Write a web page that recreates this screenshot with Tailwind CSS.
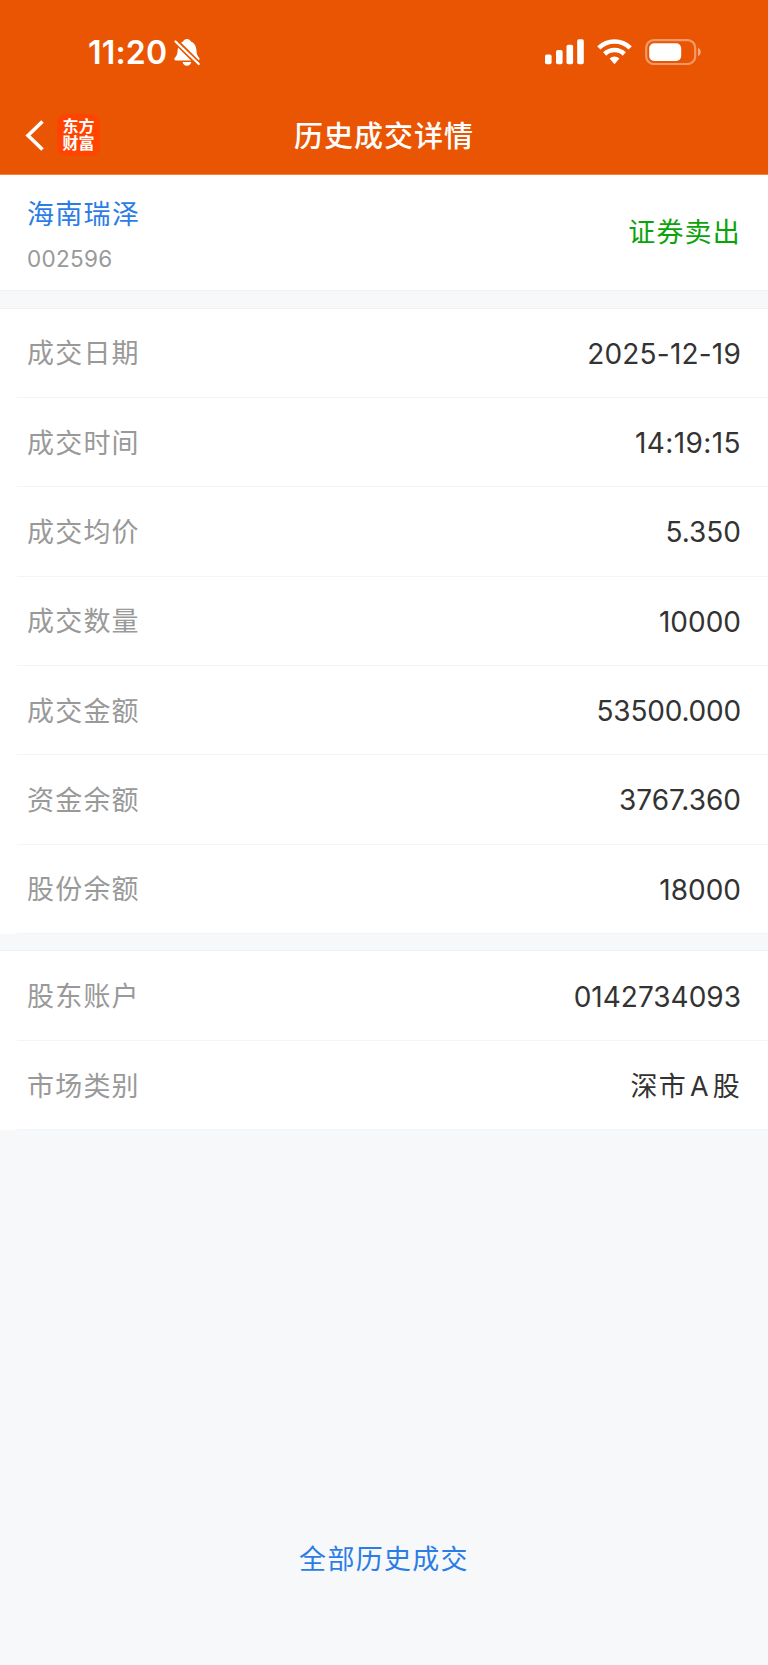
<!DOCTYPE html>
<html lang="zh-CN">
<head>
<meta charset="utf-8">
<title>历史成交详情</title>
<script src="https://cdn.jsdelivr.net/npm/@tailwindcss/browser@4"></script>
</head>
<body class="w-[768px] h-[1665px] bg-[#f7f8fa] flex flex-col overflow-hidden font-['Inter','Noto_Sans_CJK_SC',sans-serif] text-[27px] text-[#333333]">
<header class="h-[175px] shrink-0 bg-[#ea5504] text-white flex flex-col border-b border-[#f3803f]">
  <div class="h-[98px] pt-[6px] pl-[88px] pr-[67px] flex items-center justify-between">
    <div class="flex items-center gap-[6px]">
      <span class="pt-[2px] text-[32px] leading-[40px] font-semibold tracking-[0.200px]">11:20</span>
      <svg class="w-[28px] h-[30px]" viewBox="0 0 28 30">
        <path fill="#fff" d="M14 2c1.900 0 3.300 1 3.900 2.500 3.500 1.300 5.200 4.300 5.500 8.300.3 4.500 1.100 5.900 2.700 7.900.8 1 .6 2.700-1.300 2.700H3c-1.700 0-2.200-1.600-1.200-2.700 2-2.200 2.600-3.700 2.900-8 .2-4 2-6.900 5.400-8.200C10.700 3 12.100 2 14 2zM9.600 25h8.700c-.4 2.200-2.200 3.700-4.400 3.700S10 27.200 9.600 25z"/>
        <path stroke="#ea5504" stroke-width="5.600" d="M0 1.500 28 29.500"/>
        <path stroke="#fff" stroke-width="2.200" stroke-linecap="round" d="M2.500 4.500 25.800 27"/>
      </svg>
    </div>
    <div class="flex items-center gap-[13px]">
      <svg class="w-[40px] h-[26px]" viewBox="0 0 40 26" fill="#fff">
        <rect x="1" y="15.500" width="6.600" height="9.800" rx="1.800"/><rect x="12" y="11" width="6.600" height="14.300" rx="1.800"/><rect x="22.500" y="5.800" width="6.600" height="19.500" rx="1.800"/><rect x="33.200" y="0.200" width="6.600" height="25.100" rx="1.800"/>
      </svg>
      <svg class="w-[35px] h-[26px]" viewBox="0 0 35 26" fill="none" stroke="#fff" stroke-width="4.600">
        <path d="M1.800 8.900C10.500.4 24.500.4 33.200 8.900"/>
        <path d="M7.700 15C13.200 9.700 21.800 9.700 27.300 15"/>
        <path fill="#fff" stroke="none" d="M12.600 19.400c3-2.700 6.800-2.700 9.800 0L17.500 25.300z"/>
      </svg>
      <svg class="w-[56px] h-[26px]" viewBox="0 0 56 26">
        <rect x="1.200" y="1.200" width="49" height="23.800" rx="7.500" fill="none" stroke="#fff" stroke-opacity=".4" stroke-width="2.200"/>
        <rect x="4.200" y="4.200" width="32" height="17.800" rx="5" fill="#fff"/>
        <path fill="#fff" fill-opacity=".5" d="M53 8.800c3.600 1.300 3.600 7 0 8.300z"/>
      </svg>
    </div>
  </div>
  <div class="h-[76px] px-[25px] grid grid-cols-[1fr_auto_1fr] items-center">
    <div class="flex items-center gap-[12px]">
      <svg class="w-[20px] h-[34px]" viewBox="0 0 20 34"><path d="M17.500 2.500 3 16.500 17.500 30.500" fill="none" stroke="#fff" stroke-width="3.600"/></svg>
      <div class="w-[43px] h-[42px] mb-[2px] rounded-[9px] bg-[#ff4400] flex flex-col items-center justify-center font-bold text-[16px] leading-[17.500px]"><span>东方</span><span>财富</span></div>
    </div>
    <h1 class="pt-[2px] text-[29px] leading-[40px] font-medium tracking-[1px]">历史成交详情</h1>
    <div></div>
  </div>
</header>
<section class="h-[116px] shrink-0 bg-white border-b border-[#f1f2f4] px-[27px] flex items-center justify-between">
  <div class="flex flex-col pt-[5px]">
    <span class="leading-[40px] tracking-[1.300px] text-[#2b7de5]">海南瑞泽</span>
    <span class="mt-[8px] text-[22.500px] leading-[32px] tracking-[0.300px] text-[#999999]">002596</span>
  </div>
  <span class="leading-[40px] tracking-[1.200px] text-[#0aa30a]">证券卖出</span>
</section>
<div class="h-[17.500px] shrink-0 border-b border-[#eff0f2]"></div>
<section class="shrink-0 bg-white pl-[17px] flex flex-col">
  <div class="h-[89.350px] border-b border-[#f3f4f5] pl-[10px] pr-[27px] flex items-center justify-between"><span class="pt-[4px] tracking-[1.200px] text-[#999999]">成交日期</span><span class="pt-[2px] text-[28px] tracking-[0.200px]">2025-12-19</span></div>
  <div class="h-[89.350px] border-b border-[#f3f4f5] pl-[10px] pr-[27px] flex items-center justify-between"><span class="pt-[4px] tracking-[1.200px] text-[#999999]">成交时间</span><span class="pt-[2px] text-[28px] tracking-[0.400px]">14:19:15</span></div>
  <div class="h-[89.350px] border-b border-[#f3f4f5] pl-[10px] pr-[27px] flex items-center justify-between"><span class="pt-[4px] tracking-[1.200px] text-[#999999]">成交均价</span><span class="pt-[2px] text-[28px]">5.350</span></div>
  <div class="h-[89.350px] border-b border-[#f3f4f5] pl-[10px] pr-[27px] flex items-center justify-between"><span class="pt-[4px] tracking-[1.200px] text-[#999999]">成交数量</span><span class="pt-[2px] text-[28px]">10000</span></div>
  <div class="h-[89.350px] border-b border-[#f3f4f5] pl-[10px] pr-[27px] flex items-center justify-between"><span class="pt-[4px] tracking-[1.200px] text-[#999999]">成交金额</span><span class="pt-[2px] text-[28px] tracking-[-0.200px]">53500.000</span></div>
  <div class="h-[89.350px] border-b border-[#f3f4f5] pl-[10px] pr-[27px] flex items-center justify-between"><span class="pt-[4px] tracking-[1.200px] text-[#999999]">资金余额</span><span class="pt-[2px] text-[28px]">3767.360</span></div>
  <div class="h-[89.350px] border-b border-[#f3f4f5] pl-[10px] pr-[27px] flex items-center justify-between"><span class="pt-[4px] tracking-[1.200px] text-[#999999]">股份余额</span><span class="pt-[2px] text-[28px]">18000</span></div>
</section>
<div class="h-[17.500px] shrink-0 border-b border-[#eff0f2]"></div>
<section class="shrink-0 bg-white pl-[17px] flex flex-col">
  <div class="h-[89.350px] border-b border-[#f3f4f5] pl-[10px] pr-[27px] flex items-center justify-between"><span class="pt-[4px] tracking-[1.200px] text-[#999999]">股东账户</span><span class="pt-[2px] text-[28px]">0142734093</span></div>
  <div class="h-[89.350px] border-b border-[#f3f4f5] pl-[10px] pr-[27px] flex items-center justify-between"><span class="pt-[4px] tracking-[1.200px] text-[#999999]">市场类别</span><span class="pt-[4px] tracking-[1.200px]">深市<span class="mx-[3px]">A</span>股</span></div>
</section>
<footer class="flex-1 flex items-end justify-center pb-[85px]">
  <a class="leading-[40px] tracking-[1.300px] text-[#2b7de5]">全部历史成交</a>
</footer>
</body>
</html>
